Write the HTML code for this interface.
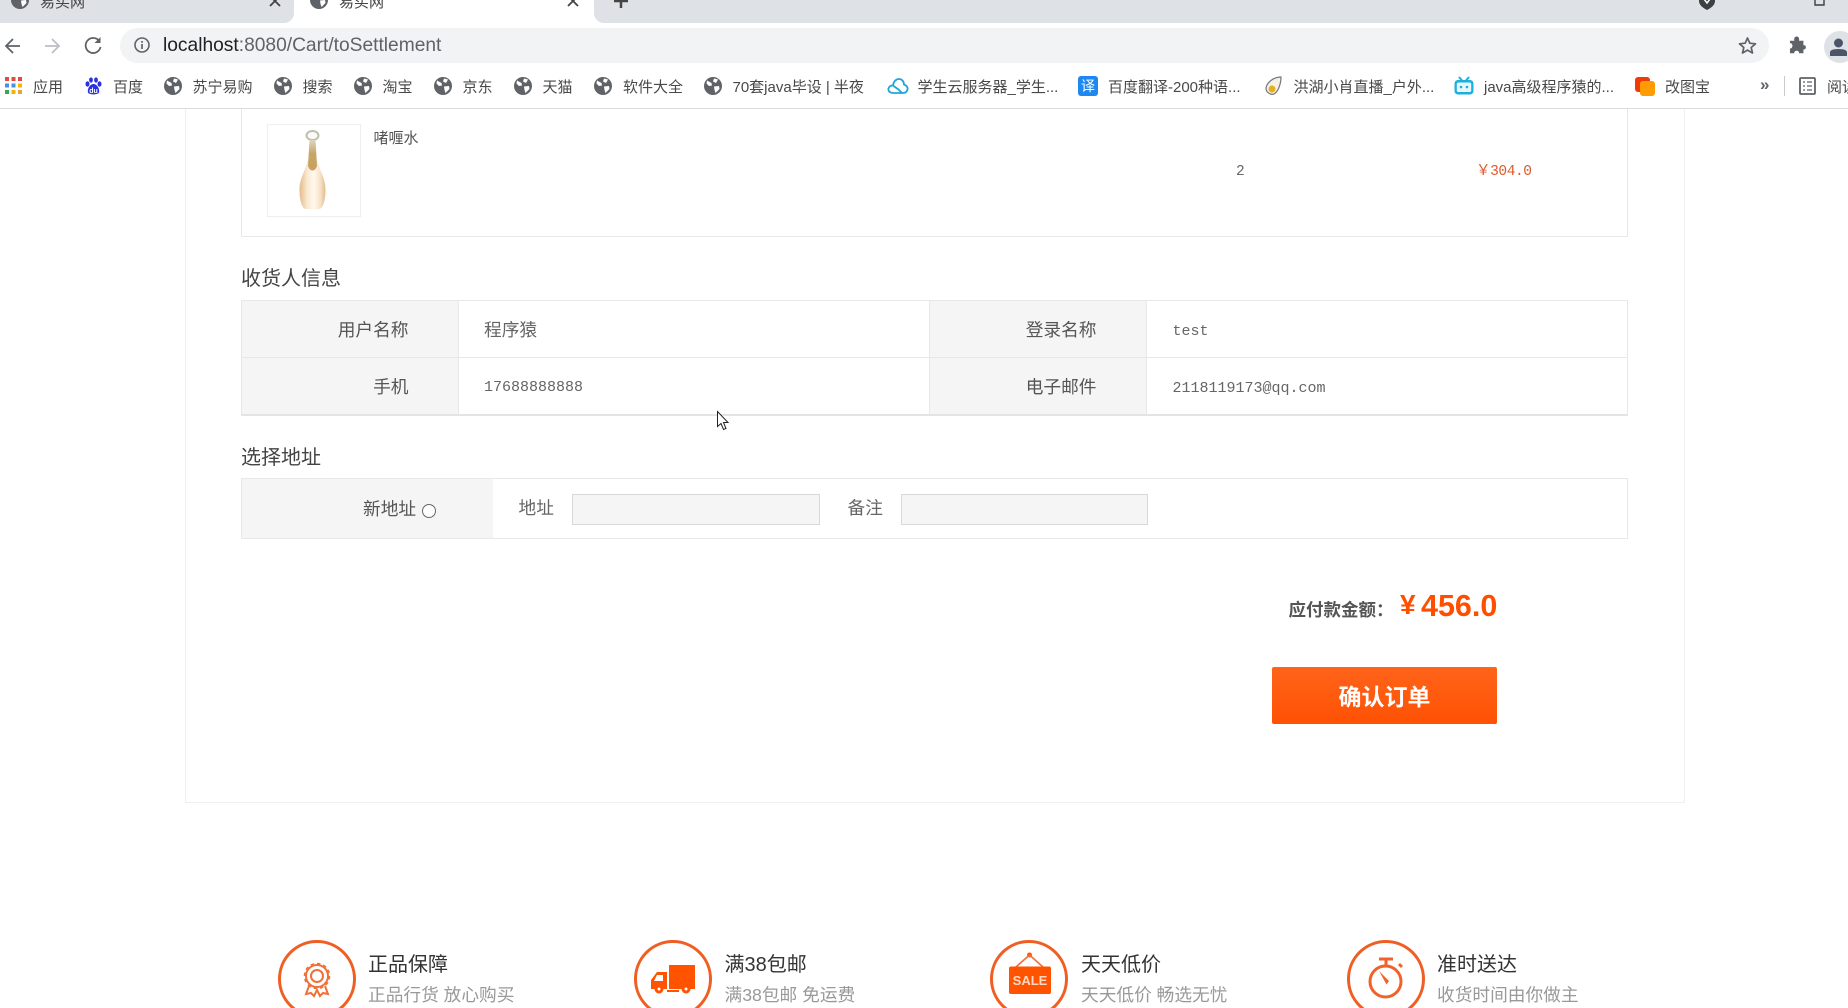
<!DOCTYPE html>
<html lang="zh"><head><meta charset="utf-8"><title>易买网</title>
<style>
html,body{margin:0;padding:0;background:#fff;width:1848px;height:1008px;overflow:hidden}
body{position:relative;font-family:"Liberation Sans","Noto Sans CJK SC",sans-serif;color:#555}
.a{position:absolute}
.t{position:absolute;white-space:nowrap;line-height:24px;height:24px}
.b{font-size:15px;color:#484848;top:75.500px}
.l{font-size:17.7px;color:#555;text-align:right}
.m{font-family:"Liberation Mono","Noto Sans CJK SC",monospace;font-size:15px;color:#666}
.h{font-size:20px;color:#444}
.g{background:#f5f5f5}
.ln{position:absolute;background:#e8e8e8}
.ft{font-size:20px;color:#333}
.fs{font-size:17.7px;color:#999}
svg{position:absolute;overflow:visible}
</style></head><body>
<svg width="0" height="0" style="position:absolute"><defs>
<symbol id="gl" viewBox="0 0 18 18"><circle cx="9" cy="9" r="9" fill="#5f6368"/><path d="M3 3.500 7.500 6 8 8.500 5 9 2.500 6.500ZM10 1.500 14 2.500 12 6 9 4.500ZM10 9.500 15 9 15.500 12 11.500 16 10.500 13Z" fill="#fff"/></symbol>
</defs></svg>

<!-- tab strip -->
<div class="a" style="left:0;top:0;width:1848px;height:23px;background:#dee1e6"></div>
<div class="a" style="left:294px;top:0;width:300px;height:23px;background:#fff"></div>
<div class="a" style="left:594px;top:0;width:12px;height:23px;background:#fff"></div>
<div class="a" style="left:594px;top:0;width:14px;height:23px;background:#dee1e6;border-bottom-left-radius:10px"></div>
<div class="a" style="left:282px;top:0;width:12px;height:23px;background:#fff"></div>
<div class="a" style="left:0;top:0;width:294px;height:23px;background:#dee1e6;border-bottom-right-radius:10px"></div>
<svg style="left:11px;top:-9px" width="18" height="18"><use href="#gl"/></svg>
<svg style="left:310px;top:-9px" width="18" height="18"><use href="#gl"/></svg>
<div class="t" style="left:40px;top:-9px;font-size:15px;color:#444">易买网</div>
<div class="t" style="left:339px;top:-9px;font-size:15px;color:#444">易买网</div>
<svg style="left:269px;top:-4px" width="12" height="12"><path d="M1 0 11 10M11 0 1 10" stroke="#444" stroke-width="1.800" fill="none"/></svg>
<svg style="left:567px;top:-4px" width="12" height="12"><path d="M1 0 11 10M11 0 1 10" stroke="#444" stroke-width="1.800" fill="none"/></svg>
<svg style="left:613px;top:-6px" width="16" height="16"><path d="M8 0V14M1 7H15" stroke="#444" stroke-width="2.500" fill="none"/></svg>
<svg style="left:1698px;top:-8px" width="18" height="18"><path d="M1 0H17V9Q17 14 9 18 1 14 1 9Z" fill="#3c4043"/><path d="M6 7 9 11 12 7" stroke="#fff" stroke-width="1.500" fill="none"/></svg>
<svg style="left:1812px;top:-4px" width="14" height="10"><path d="M3 0V9H12V0" stroke="#3c4043" stroke-width="1.400" fill="none"/></svg>

<!-- toolbar -->
<div class="a" style="left:120px;top:28px;width:1649px;height:35px;background:#f1f3f4;border-radius:18px"></div>
<svg style="left:4px;top:37px" width="18" height="18"><path d="M16 9H2M9 2 2 9 9 16" stroke="#5f6368" stroke-width="1.800" fill="none"/></svg>
<svg style="left:44px;top:37px" width="18" height="18"><path d="M1 9H15M8 2 15 9 8 16" stroke="#bcbfc3" stroke-width="1.800" fill="none"/></svg>
<svg style="left:84px;top:36px" width="18" height="18"><path d="M15.500 5.500A7.500 7.500 0 1 0 16.500 11" stroke="#5f6368" stroke-width="1.800" fill="none"/><path d="M16.500 1V7H10.500Z" fill="#5f6368"/></svg>
<svg style="left:134px;top:37px" width="16" height="16"><circle cx="8" cy="8" r="7" stroke="#5f6368" stroke-width="1.600" fill="none"/><path d="M8 7V12M8 4V5.800" stroke="#5f6368" stroke-width="1.700"/></svg>
<div class="t" style="left:163px;top:34px;font-size:19.200px;color:#5f6368"><span style="color:#202124">localhost</span>:8080/Cart/toSettlement</div>
<svg style="left:1738px;top:36px" width="19" height="19"><path d="M9.500 2 11.800 7.200 17.500 7.800 13.200 11.500 14.500 17 9.500 14.100 4.500 17 5.800 11.500 1.500 7.800 7.200 7.200Z" stroke="#5f6368" stroke-width="1.700" fill="none" stroke-linejoin="round"/></svg>
<svg style="left:1789px;top:36px" width="18" height="18"><path d="M1 5H5.500C5 1.500 6.500 0.500 8 0.500S11 1.500 10.500 5H15V9.500C18.500 9 18.500 14.500 15 14V18H10.500C11 14.500 5 14.500 5.500 18H1V13C4.500 13.500 4.500 7 1 7.500Z" fill="#5f6368" transform="scale(.96)"/></svg>
<div class="a" style="left:1824px;top:31px;width:32px;height:32px;border-radius:50%;background:#dee1e6"></div>
<svg style="left:1829px;top:37px" width="19" height="20"><circle cx="9.500" cy="6" r="4.500" fill="#4a5568"/><path d="M1 19V15.500Q1 12 9.500 12 18 12 18 15.500V19Z" fill="#4a5568"/></svg>

<!-- bookmarks -->
<svg style="left:5px;top:77px" width="17" height="17"><g fill="#e24b3f"><rect x="0" y="0" width="4" height="4"/><rect x="6.500" y="0" width="4" height="4"/><rect x="13" y="0" width="4" height="4"/></g><g fill="#4a90e2"><rect x="0" y="6.500" width="4" height="4"/><rect x="6.500" y="6.500" width="4" height="4"/></g><rect x="13" y="6.500" width="4" height="4" fill="#f4b400"/><g fill="#34a853"><rect x="0" y="13" width="4" height="4"/></g><g fill="#f4b400"><rect x="6.500" y="13" width="4" height="4"/></g><rect x="13" y="13" width="4" height="4" fill="#e8a33d"/></svg>
<div class="t b" style="left:33px">应用</div>
<svg style="left:85px;top:77px" width="17" height="18"><g fill="#2932e1"><ellipse cx="2.500" cy="7" rx="2" ry="2.700"/><ellipse cx="6" cy="3" rx="1.900" ry="2.600"/><ellipse cx="11" cy="3" rx="1.900" ry="2.600"/><ellipse cx="14.500" cy="7" rx="2" ry="2.700"/><path d="M8.500 7C5 7 2 12 3 15.500 4 18 13 18 14 15.500 15 12 12 7 8.500 7Z"/></g><text x="8.500" y="16" text-anchor="middle" font-size="7" font-weight="bold" fill="#fff" font-family="Liberation Sans">du</text></svg>
<div class="t b" style="left:113px">百度</div>
<svg style="left:164px;top:77px" width="18" height="18"><use href="#gl"/></svg><div class="t b" style="left:192.500px">苏宁易购</div>
<svg style="left:274px;top:77px" width="18" height="18"><use href="#gl"/></svg><div class="t b" style="left:302.500px">搜索</div>
<svg style="left:354px;top:77px" width="18" height="18"><use href="#gl"/></svg><div class="t b" style="left:382.500px">淘宝</div>
<svg style="left:434px;top:77px" width="18" height="18"><use href="#gl"/></svg><div class="t b" style="left:462.500px">京东</div>
<svg style="left:514px;top:77px" width="18" height="18"><use href="#gl"/></svg><div class="t b" style="left:542.500px">天猫</div>
<svg style="left:594px;top:77px" width="18" height="18"><use href="#gl"/></svg><div class="t b" style="left:623px">软件大全</div>
<svg style="left:704px;top:77px" width="18" height="18"><use href="#gl"/></svg><div class="t b" style="left:732.500px">70套java毕设 | 半夜</div>
<svg style="left:888px;top:78px" width="20" height="16"><path d="M5 15C1.500 15 0 12.500 0.500 10.500 1 8.500 3 7.200 5 7.500 5.500 3.500 8 1 11 1 14 1 16 3.500 16 6.500 18.500 7.500 20 9 19.500 11.500 19 13.500 17.500 15 15 15ZM5.500 8 10.500 11.500 14 15" stroke="#1ea6dc" stroke-width="1.800" fill="none"/></svg>
<div class="t b" style="left:917.500px">学生云服务器_学生...</div>
<div class="a" style="left:1078px;top:76px;width:20px;height:20px;border-radius:3px;background:#1e88f0;color:#fff;font-size:14px;line-height:20px;text-align:center">译</div>
<div class="t b" style="left:1108px">百度翻译-200种语...</div>
<svg style="left:1264px;top:76px" width="20" height="20"><path d="M17 1C10 1 3 6 2 12 2 17 7 19 10 18 14 16 17 8 17 1Z" fill="#f4f0e6" stroke="#777" stroke-width="1.200"/><circle cx="8" cy="13" r="3.500" fill="#e2b21e"/></svg>
<div class="t b" style="left:1293.500px">洪湖小肖直播_户外...</div>
<svg style="left:1454px;top:76px" width="20" height="19"><path d="M5 1 8 4.500M15 1 12 4.500" stroke="#1cb0de" stroke-width="2" fill="none"/><rect x="0.500" y="4" width="19" height="14.500" rx="3.500" fill="#1cb0de"/><rect x="2.800" y="6.500" width="14.400" height="9.500" rx="1.500" fill="#e9f7fc"/><circle cx="7" cy="11" r="1.300" fill="#1cb0de"/><circle cx="13" cy="11" r="1.300" fill="#1cb0de"/></svg>
<div class="t b" style="left:1484px">java高级程序猿的...</div>
<div class="a" style="left:1635px;top:76.500px;width:15px;height:15px;background:#f03a0a;border-radius:3px"></div>
<div class="a" style="left:1640px;top:81px;width:15px;height:15px;background:#ff9c00;border-radius:3px"></div>
<div class="t b" style="left:1665px">改图宝</div>
<div class="t" style="left:1760px;top:73px;font-size:17px;color:#5f6368;font-weight:bold">»</div>
<div class="a" style="left:1784px;top:76px;width:1px;height:20px;background:#c8cacd"></div>
<svg style="left:1799px;top:77px" width="17" height="18"><rect x="1" y="1" width="15" height="16" rx="1" stroke="#5f6368" stroke-width="1.800" fill="none"/><path d="M4 5H6M8 5H13M4 9H6M8 9H13M4 13H6M8 13H13" stroke="#5f6368" stroke-width="1.300"/></svg>
<div class="t b" style="left:1827px">阅读</div>
<div class="a" style="left:0;top:108px;width:1848px;height:1px;background:#dadce0"></div>

<!-- outer container -->
<div class="a" style="left:185px;top:109px;height:693px;border-left:1px solid #efefef;border-right:1px solid #efefef;border-bottom:1px solid #efefef;width:1498px"></div>

<!-- product box -->
<div class="a" style="left:241px;top:109px;width:1385px;height:127px;border-left:1px solid #e8e8e8;border-right:1px solid #e8e8e8;border-bottom:1px solid #e8e8e8"></div>
<div class="a" style="left:267px;top:124px;width:92px;height:91px;border:1px solid #eee"></div>
<svg style="left:298px;top:128px" width="30" height="84" viewBox="0 0 30 84">
<defs><linearGradient id="bt" x1="0" y1="0" x2="1" y2="0"><stop offset="0" stop-color="#e3bb8c"/><stop offset=".3" stop-color="#fae8d2"/><stop offset=".55" stop-color="#fff8ee"/><stop offset=".8" stop-color="#f7e2c8"/><stop offset="1" stop-color="#e3bb8c"/></linearGradient>
<linearGradient id="nk" x1="0" y1="0" x2="0" y2="1"><stop offset="0" stop-color="#dcd6bf"/><stop offset=".45" stop-color="#c7a56a"/><stop offset="1" stop-color="#c9a05f"/></linearGradient></defs>
<ellipse cx="14.500" cy="7.500" rx="6" ry="4.500" fill="#fbfbf8" stroke="#c0bfae" stroke-width="2"/>
<path d="M11.500 12H17.500L18.500 30C22 44 27.500 50 27.500 62 27.500 72 25 81 21 81H8C4 81 1.500 72 1.500 62 1.500 50 7 44 10.500 30Z" fill="url(#bt)"/>
<path d="M11.500 12H17.500L19 38C17 44 12 44 10 38Z" fill="url(#nk)"/>
</svg>
<div class="t" style="left:373.500px;top:126.500px;font-size:15px;color:#555">啫喱水</div>
<div class="t m" style="left:1236px;top:160px;font-size:14.500px">2</div>
<div class="t m" style="left:1476px;top:160px;font-size:14.500px;color:#dc5a2c;letter-spacing:-.4px">￥304.0</div>

<!-- receiver -->
<div class="t h" style="left:241px;top:267px">收货人信息</div>
<div class="a" style="left:241px;top:300px;width:1385px;height:113px;border:1px solid #e8e8e8;border-bottom:2px solid #e4e4e4"></div>
<div class="a g" style="left:242px;top:301px;width:216px;height:113px"></div>
<div class="a g" style="left:929px;top:301px;width:217px;height:113px"></div>
<div class="ln" style="left:458px;top:301px;width:1px;height:113px"></div>
<div class="ln" style="left:929px;top:301px;width:1px;height:113px"></div>
<div class="ln" style="left:1146px;top:301px;width:1px;height:113px"></div>
<div class="ln" style="left:242px;top:357px;width:1385px;height:1px"></div>
<div class="t l" style="left:242px;width:166.500px;top:318px">用户名称</div>
<div class="t l" style="left:242px;width:166.500px;top:375px">手机</div>
<div class="t l" style="left:930px;width:166.500px;top:318px">登录名称</div>
<div class="t l" style="left:930px;width:166.500px;top:375px">电子邮件</div>
<div class="t" style="left:484px;top:318px;font-size:17.700px;color:#666">程序猿</div>
<div class="t m" style="left:484px;top:376px">17688888888</div>
<div class="t m" style="left:1172.500px;top:320px">test</div>
<div class="t m" style="left:1172.500px;top:377px">2118119173@qq.com</div>

<!-- cursor -->
<svg style="left:717px;top:411px" width="13" height="20"><path d="M0.500 0.500V15.500L4 12.500 6.500 18.500 9 17.500 6.500 11.500H11Z" fill="#fff" stroke="#222" stroke-width="1"/></svg>

<!-- address -->
<div class="t h" style="left:241px;top:446px">选择地址</div>
<div class="a" style="left:241px;top:478px;width:1385px;height:59px;border:1px solid #e8e8e8"></div>
<div class="a g" style="left:242px;top:479px;width:251px;height:59px"></div>
<div class="t" style="left:363px;top:497px;font-size:17.700px;color:#555">新地址</div>
<div class="a" style="left:422px;top:504px;width:12px;height:12px;border:1.500px solid #666;border-radius:50%;background:#fff"></div>
<div class="t" style="left:518.500px;top:495.500px;font-size:17.700px;color:#666">地址</div>
<div class="a" style="left:572px;top:494px;width:246px;height:29px;background:#f5f5f5;border:1px solid #d9d9d9"></div>
<div class="t" style="left:847.500px;top:495.500px;font-size:17.700px;color:#666">备注</div>
<div class="a" style="left:901px;top:494px;width:245px;height:29px;background:#f5f5f5;border:1px solid #d9d9d9"></div>

<!-- total -->
<div class="t" style="left:1288.500px;top:597.500px;font-size:17.500px;font-weight:bold;color:#555">应付款金额：</div>
<div class="t" style="left:1400px;top:593px;font-size:28px;font-weight:bold;color:#ff4e00">¥</div>
<div class="t" style="left:1421px;top:593.500px;font-size:30.500px;font-weight:bold;color:#ff4e00">456.0</div>
<div class="a" style="left:1272px;top:667px;width:225px;height:57px;border-radius:2px;background:linear-gradient(#ff6116,#ff4e00);color:#fff;font-size:23px;font-weight:bold;text-align:center;line-height:60px;opacity:.98">确认订单</div>

<!-- footer -->
<svg style="left:278px;top:940px" width="78" height="78"><circle cx="39" cy="39" r="37.500" stroke="#ef5f24" stroke-width="3" fill="none"/>
<g fill="none" stroke="#f0703a"><circle cx="39" cy="36" r="11" stroke-width="2"/><circle cx="39" cy="36" r="6" stroke-width="2"/><circle cx="39" cy="36" r="12.500" stroke-width="1.600" stroke-dasharray="3.500 3"/><path d="M31 46 28 54 33 53 36 56 39 50 42 56 45 53 50 54 47 46" stroke-width="2"/></g></svg>
<div class="t ft" style="left:368px;top:953px">正品保障</div>
<div class="t fs" style="left:368px;top:983px">正品行货 放心购买</div>

<svg style="left:634px;top:940px" width="78" height="78"><circle cx="39" cy="39" r="37.500" stroke="#ef5f24" stroke-width="3" fill="none"/>
<g fill="#ff5300"><rect x="35" y="25" width="26" height="22"/><path d="M23 32H33V49H17V40Z"/><rect x="35" y="47" width="26" height="2"/><circle cx="25" cy="49" r="4.500"/><circle cx="52" cy="49" r="4.500"/></g><path d="M23 35H29V41H20Z" fill="#fff"/><circle cx="25" cy="49" r="1.500" fill="#fff"/><circle cx="52" cy="49" r="1.500" fill="#fff"/><path d="M33 51H45" stroke="#ff5300" stroke-width="2"/></svg>
<div class="t ft" style="left:724.500px;top:953px">满38包邮</div>
<div class="t fs" style="left:724.500px;top:983px">满38包邮 免运费</div>

<svg style="left:990px;top:940px" width="78" height="78"><circle cx="39" cy="39" r="37.500" stroke="#ef5f24" stroke-width="3" fill="none"/>
<circle cx="39.500" cy="15" r="2.500" fill="#ff5300"/><path d="M26 27 39.500 15 53 27" stroke="#f0703a" stroke-width="1.600" fill="none"/>
<rect x="19" y="26.500" width="42" height="27.500" rx="2" fill="#ff5300"/>
<text x="40" y="45" text-anchor="middle" font-family="Liberation Sans" font-weight="bold" font-size="13" fill="#ffd9c4">SALE</text></svg>
<div class="t ft" style="left:1081px;top:953px">天天低价</div>
<div class="t fs" style="left:1081px;top:983px">天天低价 畅选无忧</div>

<svg style="left:1347px;top:940px" width="78" height="78"><circle cx="39" cy="39" r="37.500" stroke="#ef5f24" stroke-width="3" fill="none"/>
<path d="M32 19H46" stroke="#f0622a" stroke-width="3"/><path d="M39 19V25M52 24 55 27" stroke="#f0622a" stroke-width="3"/>
<circle cx="38.500" cy="41.500" r="15.500" stroke="#f0622a" stroke-width="3" fill="none"/>
<path d="M32 31 42 41 39.500 44.500Z" fill="#f0622a"/></svg>
<div class="t ft" style="left:1437px;top:953px">准时送达</div>
<div class="t fs" style="left:1437px;top:983px">收货时间由你做主</div>
</body></html>
